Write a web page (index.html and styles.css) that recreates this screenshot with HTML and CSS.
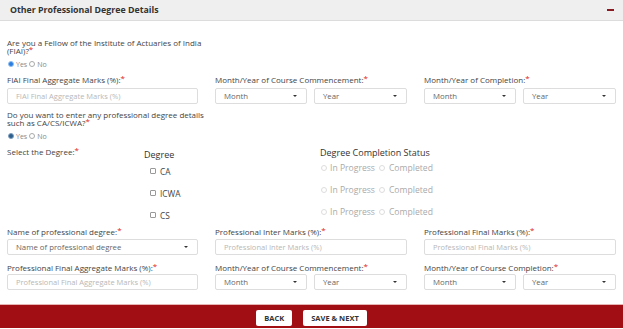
FILE: index.html
```html
<!DOCTYPE html>
<html lang="en">

<head>
    <meta charset="UTF-8">
    <meta name="viewport" content="width=device-width, initial-scale=1.0">
    <title>Other Professional Degree Details</title>
    <link rel="stylesheet" href="styles.css">
</head>

<body>
    <div class="panel-head">
        <span class="panel-title">Other Professional Degree Details</span>
        <span class="collapse"></span>
    </div>

    <div class="content">
        <div class="question">Are you a Fellow of the Institute of Actuaries of India (FIAI)?<span class="req">*</span></div>
        <div class="radios">
            <span class="radio checked"></span><span class="opt">Yes</span>
            <span class="radio"></span><span class="opt">No</span>
        </div>

        <div class="row first-row">
            <div class="field">
                <label>FIAI Final Aggregate Marks (%):<span class="req">*</span></label>
                <input type="text" placeholder="FIAI Final Aggregate Marks (%)">
            </div>
            <div class="field">
                <label>Month/Year of Course Commencement:<span class="req">*</span></label>
                <div class="pair">
                    <div class="select">Month<span class="caret"></span></div>
                    <div class="select">Year<span class="caret"></span></div>
                </div>
            </div>
            <div class="field">
                <label>Month/Year of Completion:<span class="req">*</span></label>
                <div class="pair">
                    <div class="select">Month<span class="caret"></span></div>
                    <div class="select">Year<span class="caret"></span></div>
                </div>
            </div>
        </div>

        <div class="question q2">Do you want to enter any professional degree details such as CA/CS/ICWA?<span class="req">*</span></div>
        <div class="radios">
            <span class="radio checked dark"></span><span class="opt">Yes</span>
            <span class="radio"></span><span class="opt">No</span>
        </div>

        <div class="degrees">
            <div class="select-label">Select the Degree:<span class="req">*</span></div>
            <div class="degree-col">
                <div class="col-head">Degree</div>
                <div class="degree-item"><span class="check"></span>CA</div>
                <div class="degree-item"><span class="check"></span>ICWA</div>
                <div class="degree-item"><span class="check"></span>CS</div>
            </div>
            <div class="status-col">
                <div class="col-head">Degree Completion Status</div>
                <div class="status-item"><span class="radio off"></span>In Progress<span class="radio off"></span>Completed</div>
                <div class="status-item"><span class="radio off"></span>In Progress<span class="radio off"></span>Completed</div>
                <div class="status-item"><span class="radio off"></span>In Progress<span class="radio off"></span>Completed</div>
            </div>
        </div>

        <div class="row after-degrees">
            <div class="field">
                <label>Name of professional degree:<span class="req">*</span></label>
                <div class="select">Name of professional degree<span class="caret"></span></div>
            </div>
            <div class="field">
                <label>Professional Inter Marks (%):<span class="req">*</span></label>
                <input type="text" placeholder="Professional Inter Marks (%)">
            </div>
            <div class="field">
                <label>Professional Final Marks (%):<span class="req">*</span></label>
                <input type="text" placeholder="Professional Final Marks (%)">
            </div>
        </div>

        <div class="row last-row">
            <div class="field">
                <label>Professional Final Aggregate Marks (%):<span class="req">*</span></label>
                <input type="text" placeholder="Professional Final Aggregate Marks (%)">
            </div>
            <div class="field">
                <label>Month/Year of Course Commencement:<span class="req">*</span></label>
                <div class="pair">
                    <div class="select">Month<span class="caret"></span></div>
                    <div class="select">Year<span class="caret"></span></div>
                </div>
            </div>
            <div class="field">
                <label>Month/Year of Course Completion:<span class="req">*</span></label>
                <div class="pair">
                    <div class="select">Month<span class="caret"></span></div>
                    <div class="select">Year<span class="caret"></span></div>
                </div>
            </div>
        </div>
    </div>

    <div class="footer">
        <button>BACK</button>
        <button>SAVE &amp; NEXT</button>
    </div>
</body>

</html>
```

FILE: styles.css
```css
* {
    margin: 0px;
    box-sizing: border-box;
}

body {
    font-family: "Open Sans", "Liberation Sans", sans-serif;
    font-size: 8px;
    color: #444;
    background: #fff;
    width: 623px;
}

.panel-head {
    height: 21px;
    background: #efefef;
    border-bottom: 1px solid #dcdcdc;
    display: flex;
    align-items: center;
    justify-content: space-between;
    padding: 0 9px 0 10px;
}

.panel-title {
    font-size: 8.8px;
    font-weight: bold;
    color: #333;
}

.collapse {
    width: 7px;
    height: 2px;
    background: #8a1a22;
}

.content {
    padding: 0 7px;
}

.question {
    width: 200px;
    line-height: 8px;
    margin-top: 18px;
    color: #444;
}

.q2 {
    margin-top: 7px;
}

.req {
    color: #e02020;
    font-size: 8px;
    vertical-align: 2px;
    line-height: 0;
}

.radios {
    display: flex;
    align-items: center;
    height: 8px;
    margin-top: 5px;
    color: #888;
    font-size: 7px;
}

.radio {
    width: 6px;
    height: 6px;
    border-radius: 50%;
    border: 1px solid #aaa;
    background: #fff;
    display: inline-block;
    margin: 0 2px 0 1px;
}

.radio.checked {
    background: #2a7de1;
    border: 1px solid #8fbef0;
}

.radio.dark {
    background: #2e5e8c;
    border-color: #7d9fbf;
}

.radio.off {
    border-color: #ddd;
    margin: 0 3px 0 1px;
}

.opt {
    margin-right: 1px;
}

.row {
    display: grid;
    grid-template-columns: 191px 192px 192px;
    column-gap: 17px;
}

.first-row {
    margin-top: 8px;
}

.after-degrees {
    margin-top: 2px;
}

.last-row {
    margin-top: 9px;
}

.field label {
    display: block;
    line-height: 8px;
    margin-bottom: 3px;
    color: #444;
}

.first-row label {
    margin-bottom: 4px;
}

.last-row label {
    margin-bottom: 2px;
}

input {
    display: block;
    width: 100%;
    height: 16px;
    border: 1px solid #ddd;
    border-radius: 2px;
    padding: 0 8px;
    font-family: inherit;
    font-size: 7.5px;
    color: #555;
}

input::placeholder {
    color: #b8b8b8;
}

.pair {
    display: grid;
    grid-template-columns: 92px 93px;
    column-gap: 7px;
}

.select {
    height: 16px;
    border: 1px solid #ddd;
    border-radius: 2px;
    padding: 0 9px 0 8px;
    display: flex;
    align-items: center;
    justify-content: space-between;
    color: #666;
    font-size: 7.8px;
}

.caret {
    width: 0;
    height: 0;
    border-left: 2.5px solid transparent;
    border-right: 2.5px solid transparent;
    border-top: 2.5px solid #333;
}

.degrees {
    display: grid;
    grid-template-columns: 137px 176px auto;
    margin-top: 8px;
}

.select-label {
    line-height: 8px;
}

.col-head {
    font-size: 9px;
    color: #333;
    line-height: 10px;
    margin-top: 2px;
}

.degree-item {
    height: 22px;
    display: flex;
    align-items: center;
    padding-left: 6px;
    font-size: 8.3px;
    color: #444;
}

.check {
    width: 6px;
    height: 6px;
    border: 1px solid #999;
    border-radius: 1px;
    margin-right: 4px;
}

.status-col .col-head {
    margin-top: 1px;
    line-height: 8px;
}

.status-item {
    height: 22px;
    display: flex;
    align-items: center;
    font-size: 8.6px;
    color: #aaa;
}

.status-item .radio + .radio {
    margin-left: 4px;
    margin-right: 4px;
}

.footer {
    margin-top: 15px;
    height: 23px;
    background: #a10e14;
    box-shadow: 0 -1px 0 #e8b5b5;
    display: flex;
    justify-content: center;
    align-items: flex-start;
    gap: 11px;
    padding-top: 5px;
}

.footer button {
    height: 16px;
    background: #fff;
    border: none;
    border-radius: 2px;
    font-family: inherit;
    font-size: 7.5px;
    font-weight: bold;
    color: #333;
    padding: 0 8px;
}
```
